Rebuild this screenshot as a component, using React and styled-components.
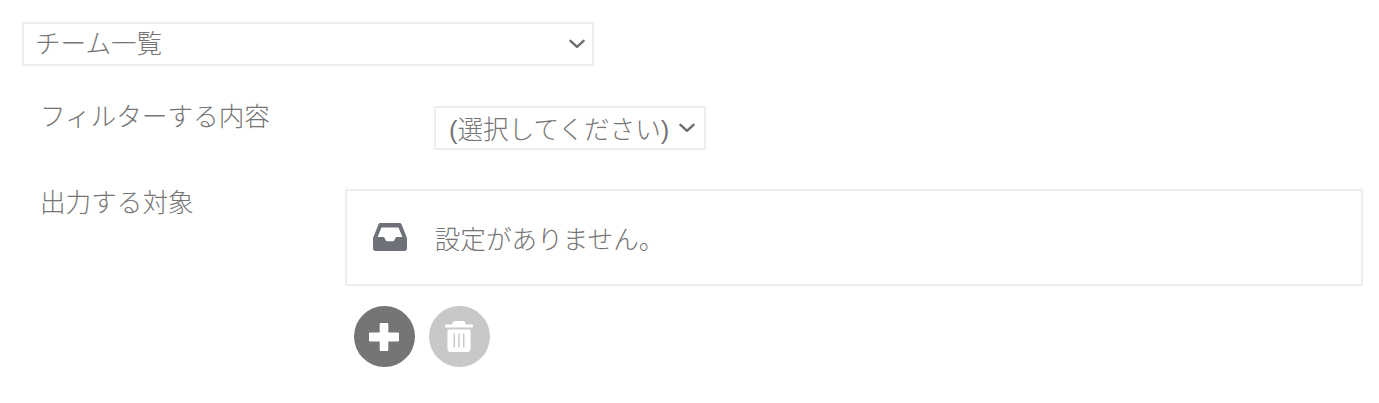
import React from "react";
import styled, { createGlobalStyle } from "styled-components";

const GlobalStyle = createGlobalStyle`
  html, body {
    margin: 0;
    padding: 0;
    background: #fff;
  }
  body {
    font-family: "Liberation Sans", "Noto Sans CJK JP", sans-serif;
    font-size: 25.6px;
    font-weight: 300;
    color: #757575;
  }
`;

const Chevron = () => (
  <svg width="16" height="10" viewBox="0 0 16 10" fill="none">
    <path d="M1.500 1.800l6.500 6 6.500-6" stroke="#6f6f6f" strokeWidth="2.500" strokeLinecap="round" strokeLinejoin="round" />
  </svg>
);

const InboxIcon = () => (
  <svg width="34" height="28" viewBox="0 0 34 28">
    <path
      fill="#6f7178"
      fillRule="evenodd"
      d="M7.500 0h19c.9 0 1.600.5 2 1.300L34 15v10.500c0 1.400-1.100 2.500-2.500 2.500h-29C1.100 28 0 26.900 0 25.500V15L5.500 1.300C5.900.5 6.600 0 7.500 0zM8.500 4.500L4.600 14H11l2.200 4.300h7.600L23 14h6.400L25.500 4.500h-17z"
    />
  </svg>
);

const PlusIcon = () => (
  <svg width="30" height="28" viewBox="0 0 30 28">
    <path
      fill="#fff"
      d="M12 0h6c.8 0 1.300.5 1.300 1.300V9.500h9.400c.8 0 1.300.5 1.300 1.300v6.400c0 .8-.5 1.300-1.300 1.300h-9.400v8.200c0 .8-.5 1.300-1.300 1.300h-6c-.8 0-1.300-.5-1.300-1.300v-8.200H1.300C.5 18.500 0 18 0 17.200v-6.400c0-.8.5-1.300 1.300-1.300h9.400V1.300C10.700.5 11.200 0 12 0z"
    />
  </svg>
);

const TrashIcon = () => (
  <svg width="28" height="31" viewBox="0 0 28 31">
    <path
      fill="#fff"
      d="M10 0h8c.8 0 1.400.4 1.800 1.100L21 3.500h6c.6 0 1 .4 1 1V6c0 .3-.2.500-.5.500H.5C.2 6.500 0 6.300 0 6V4.500c0-.6.4-1 1-1h6l1.200-2.400C8.600.4 9.200 0 10 0z"
    />
    <path
      fill="#fff"
      fillRule="evenodd"
      d="M2.500 8.500h23V28c0 1.700-1.300 3-3 3h-17c-1.700 0-3-1.300-3-3V8.500zm6 4v14h1.500v-14H8.500zm4.750 0v14h1.500v-14h-1.500zm4.750 0v14h1.500v-14H18z"
    />
  </svg>
);

const App = () => {
  return (
    <Page>
      <GlobalStyle />
      <TeamSelect>
        <span>チーム一覧</span>
        <Chevron />
      </TeamSelect>

      <FilterRow>
        <FilterLabel>フィルターする内容</FilterLabel>
        <FilterSelect>
          <span>(選択してください)</span>
          <Chevron />
        </FilterSelect>
      </FilterRow>

      <TargetRow>
        <TargetLabel>出力する対象</TargetLabel>
        <TargetBody>
          <EmptyBox>
            <InboxIcon />
            <EmptyText>設定がありません。</EmptyText>
          </EmptyBox>
          <Actions>
            <RoundButton $color="#757575">
              <PlusIcon />
            </RoundButton>
            <RoundButton $color="#c8c8c8">
              <TrashIcon />
            </RoundButton>
          </Actions>
        </TargetBody>
      </TargetRow>
    </Page>
  );
};

const Page = styled.div`
  width: 1379px;
  height: 403px;
  box-sizing: border-box;
  padding: 22px 16px 0 22px;
  overflow: hidden;
`;

const SelectBox = styled.div`
  box-sizing: border-box;
  height: 44px;
  display: flex;
  align-items: center;
  justify-content: space-between;
  border: 2px solid #eeeeee;
  background: #fff;
  white-space: nowrap;
  span {
    line-height: 30px;
  }
`;

const TeamSelect = styled(SelectBox)`
  width: 572px;
  padding: 0 7px 0 11px;
  span {
    margin-bottom: 1px;
  }
`;

const FilterRow = styled.div`
  display: flex;
  align-items: flex-start;
  margin-top: 40px;
  padding-left: 18px;
`;

const FilterLabel = styled.div`
  width: 394px;
  line-height: 28px;
  margin-top: -3px;
  white-space: nowrap;
`;

const FilterSelect = styled(SelectBox)`
  width: 272px;
  padding: 0 9px 0 13px;
  span {
    margin-top: 3px;
  }
`;

const TargetRow = styled.div`
  display: flex;
  align-items: flex-start;
  margin-top: 39px;
  padding-left: 18px;
`;

const TargetLabel = styled.div`
  width: 305px;
  line-height: 28px;
  margin-top: 0;
  white-space: nowrap;
`;

const TargetBody = styled.div`
  width: 1019px;
`;

const EmptyBox = styled.div`
  box-sizing: border-box;
  height: 97px;
  display: flex;
  align-items: center;
  gap: 28px;
  padding: 0 0 2px 26px;
  border: 2px solid #eeeeee;
`;

const EmptyText = styled.span`
  white-space: nowrap;
  margin-top: 2px;
`;

const Actions = styled.div`
  display: flex;
  gap: 14px;
  margin-top: 20px;
  padding-left: 9px;
`;

const RoundButton = styled.div`
  width: 61px;
  height: 61px;
  border-radius: 50%;
  display: flex;
  align-items: center;
  justify-content: center;
  background: ${(p) => p.$color};
`;

export default App;
